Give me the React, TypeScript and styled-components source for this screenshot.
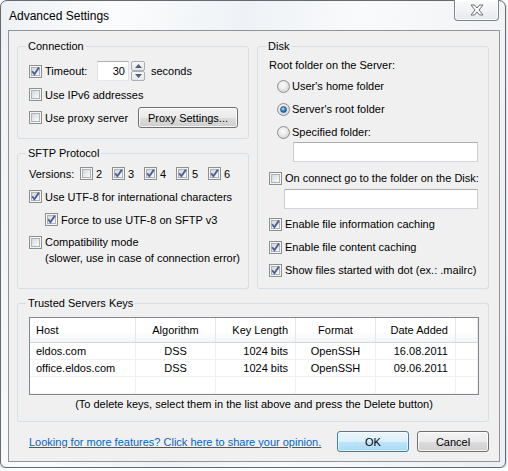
import React from "react";
import styled, { createGlobalStyle, css } from "styled-components";

const GlobalStyle = createGlobalStyle`
  html, body { margin: 0; padding: 0; background: #ffffff; }
  body { font-family: "Liberation Sans", Arial, sans-serif; font-size: 11px; color: #000; }
  *, *::before, *::after { box-sizing: border-box; }
`;

const Window = styled.div`
  width: 506px;
  height: 468px;
  display: flex;
  flex-direction: column;
  padding: 0 5px 5px 7px;
  border: 1px solid #646a70;
  border-radius: 7px 7px 6px 6px;
  background: linear-gradient(100deg, #eef1f5 0%, #fbfcfd 20%, #eef2f6 42%, #f9fafb 62%, #eceff3 100%);
  box-shadow: 0 1px 3px rgba(0, 0, 0, 0.3);
`;

const TitleBar = styled.div`
  flex: 0 0 29px;
  display: flex;
  align-items: flex-start;
  justify-content: space-between;
`;

const Title = styled.div`
  margin: 7px 0 0 1px;
  font-size: 12px;
  line-height: 16px;
`;

const CloseButton = styled.div`
  width: 45px;
  height: 21px;
  margin: -1px 1px 0 0;
  border: 1px solid #7f858c;
  border-top: none;
  border-radius: 0 0 4px 4px;
  background: linear-gradient(#fafbfc, #e6e9ed);
  box-shadow: inset 0 0 0 1px rgba(255, 255, 255, 0.7);
  display: flex;
  align-items: center;
  justify-content: center;
`;

const Client = styled.div`
  flex: 1;
  display: flex;
  flex-direction: column;
  border: 1px solid #8f959b;
  background: #f0f0f0;
  padding: 8px 10px 8px 8px;
`;

const TopRow = styled.div`
  display: grid;
  grid-template-columns: 232px 232px;
  column-gap: 8px;
  height: 250px;
  flex: 0 0 250px;
`;

const Column = styled.div`
  display: flex;
  flex-direction: column;
  gap: 7px;
`;

const Group = styled.fieldset<{ $h: number; $pt: number; $mt?: number }>`
  margin: ${(p) => p.$mt ?? 0}px 0 0 0;
  min-width: 0;
  height: ${(p) => p.$h}px;
  flex: 0 0 auto;
  padding: ${(p) => p.$pt}px 9px 0 11px;
  border: 1px solid #d5dfe5;
  border-radius: 3px;
  display: flex;
  flex-direction: column;
`;

const Legend = styled.legend`
  padding: 0 2px;
  margin-left: -3px;
  line-height: 14px;
  font-size: 11px;
`;

const Row = styled.div<{ $mt?: number; $ml?: number; $h?: number }>`
  display: flex;
  align-items: center;
  flex: 0 0 auto;
  height: ${(p) => p.$h ?? 21}px;
  margin-top: ${(p) => p.$mt ?? 0}px;
  margin-left: ${(p) => p.$ml ?? 0}px;
`;

const TopRowAlign = styled(Row)`
  align-items: flex-start;
  height: auto;
  padding-top: 2px;
`;

const CheckItem = styled.label<{ $w?: number; $top?: boolean }>`
  display: flex;
  align-items: ${(p) => (p.$top ? "flex-start" : "center")};
  gap: 3px;
  flex: 0 0 auto;
  width: ${(p) => (p.$w ? `${p.$w}px` : "auto")};
  line-height: 16px;
`;

const RadioItem = styled.label`
  display: flex;
  align-items: center;
  gap: 2px;
  line-height: 16px;
`;

const TextLines = styled.div`
  display: flex;
  flex-direction: column;
  line-height: 16px;
`;

const Box = styled.span<{ $mt?: number }>`
  position: relative;
  flex: 0 0 13px;
  width: 13px;
  height: 13px;
  margin-top: ${(p) => p.$mt ?? 0}px;
  border: 1px solid #8e8f8f;
  background: #f4f4f4;
  &::before {
    content: "";
    position: absolute;
    left: 1px;
    top: 1px;
    width: 9px;
    height: 9px;
    border: 1px solid #aeb3b9;
    background: linear-gradient(135deg, #d2d5da 0%, #e9ebee 55%, #fbfbfb 100%);
  }
  & > svg {
    position: absolute;
    left: 0;
    top: 0;
  }
`;

const RadioDot = styled.span<{ $checked?: boolean }>`
  position: relative;
  flex: 0 0 13px;
  width: 13px;
  height: 13px;
  border-radius: 50%;
  border: 1px solid #8e8f8f;
  background: radial-gradient(circle at 45% 40%, #fbfbfb 0%, #eeeeee 35%, #d2d2d2 80%, #e4e4e4 100%);
  ${(p) =>
    p.$checked &&
    css`
      &::after {
        content: "";
        position: absolute;
        inset: 2px;
        border-radius: 50%;
        border: 1px solid #24578d;
        background: radial-gradient(circle at 40% 35%, #b5e6fd 0%, #4aa2e0 35%, #14589c 80%);
      }
    `}
`;

const NumberInput = styled.input`
  width: 32px;
  height: 20px;
  margin: 0;
  padding: 0 3px 0 0;
  border: 1px solid #abadb3;
  border-color: #abadb3 #dbdfe6 #e3e9ef #e2e3ea;
  background: #fff;
  font: inherit;
  text-align: right;
  outline: none;
`;

const TextBox = styled.div<{ $w: number; $ml: number; $mt: number }>`
  flex: 0 0 20px;
  width: ${(p) => p.$w}px;
  height: 20px;
  margin: ${(p) => p.$mt}px 0 0 ${(p) => p.$ml}px;
  background: #fff;
  border: 1px solid #abadb3;
  border-color: #abadb3 #c9ccd2 #d2d6dc #c9ccd2;
`;

const Spin = styled.div`
  display: flex;
  flex-direction: column;
  width: 14px;
  height: 20px;
  margin: 0 6px 0 2px;
`;

const SpinButton = styled.div`
  flex: 0 0 10px;
  border: 1px solid #a9adb4;
  border-radius: 2px;
  background: linear-gradient(#f7f7f7, #e4e6e9);
  display: flex;
  align-items: center;
  justify-content: center;
`;

const Button = styled.button<{ $w: number; $default?: boolean }>`
  width: ${(p) => p.$w}px;
  height: 21px;
  padding: 0;
  font: inherit;
  color: #000;
  border: 1px solid ${(p) => (p.$default ? "#3c7fb1" : "#707070")};
  border-radius: 3px;
  background: ${(p) =>
    p.$default
      ? "linear-gradient(#eaf6fd 0%, #d9f0fc 50%, #bee6fd 50%, #a7d9f5 100%)"
      : "linear-gradient(#f2f2f2 0%, #ebebeb 50%, #dddddd 50%, #cfcfcf 100%)"};
  box-shadow: inset 0 0 0 1px ${(p) => (p.$default ? "rgba(255,255,255,0.6)" : "rgba(255,255,255,0.8)")};
`;

const VersionLabel = styled.span`
  flex: 0 0 51px;
`;

const VersionItem = styled(CheckItem)`
  width: 32px;
`;

const Plain = styled.div<{ $mt?: number }>`
  line-height: 14px;
  margin-top: ${(p) => p.$mt ?? 0}px;
`;

const List = styled.div`
  width: 450px;
  height: 78px;
  border: 1px solid #828790;
  background: #fff;
  display: grid;
  grid-template-columns: 106px 80px 80px 80px 80px 1fr;
  grid-template-rows: 25px repeat(3, 17px);
  align-content: start;
`;

type Align = "left" | "center" | "right";

const alignCss = (a: Align) =>
  a === "left"
    ? css`justify-content: flex-start; padding-left: 6px;`
    : a === "right"
    ? css`justify-content: flex-end; padding-right: 7px;`
    : css`justify-content: center;`;

const HeadCell = styled.div<{ $align: Align }>`
  display: flex;
  align-items: center;
  ${(p) => alignCss(p.$align)}
  border-right: 1px solid #e3e6ea;
  border-bottom: 1px solid #d5d5d5;
  background: linear-gradient(#ffffff 0%, #ffffff 55%, #f4f5f7 100%);
`;

const Cell = styled.div<{ $align: Align }>`
  display: flex;
  align-items: center;
  ${(p) => alignCss(p.$align)}
  border-right: 1px solid #f0f0f0;
  border-bottom: 1px solid #f0f0f0;
  white-space: nowrap;
`;

const Note = styled.div`
  margin-top: 1px;
  line-height: 16px;
  text-align: center;
`;

const BottomBar = styled.div`
  display: flex;
  align-items: center;
  gap: 8px;
  height: 21px;
  margin-top: 9px;
  padding-left: 12px;
`;

const Link = styled.a`
  margin-right: auto;
  color: #0066cc;
  text-decoration: underline;
  cursor: pointer;
`;

const Check = () => (
  <svg width="11" height="11" viewBox="0 0 11 11">
    <path d="M2.2 5.3 L4.4 8.2 L8.9 1.6" fill="none" stroke="#4a5f97" strokeWidth="1.9" />
  </svg>
);

const CheckBox = ({ checked, mt }: { checked?: boolean; mt?: number }) => (
  <Box $mt={mt}>{checked && <Check />}</Box>
);

const Arrow = ({ up }: { up?: boolean }) => (
  <svg width="7" height="4" viewBox="0 0 7 4">
    <path d={up ? "M0 4 L3.5 0 L7 4 Z" : "M0 0 L3.5 4 L7 0 Z"} fill="#4d5d7e" />
  </svg>
);

const CloseGlyph = () => (
  <svg width="14" height="12" viewBox="0 0 14 12">
    <polygon
      points="1,1 4.5,1 7,4 9.5,1 13,1 9,6 13,11 9.5,11 7,8 4.5,11 1,11 5,6"
      fill="#fbfbfb"
      stroke="#6a6e73"
      strokeWidth="1"
      strokeLinejoin="round"
    />
  </svg>
);

const keys = [
  { host: "eldos.com", alg: "DSS", len: "1024 bits", fmt: "OpenSSH", date: "16.08.2011" },
  { host: "office.eldos.com", alg: "DSS", len: "1024 bits", fmt: "OpenSSH", date: "09.06.2011" },
  { host: "", alg: "", len: "", fmt: "", date: "" },
];

const versions: [string, boolean][] = [
  ["2", false],
  ["3", true],
  ["4", true],
  ["5", true],
  ["6", true],
];

export default function App() {
  return (
    <>
      <GlobalStyle />
      <Window>
        <TitleBar>
          <Title>Advanced Settings</Title>
          <CloseButton>
            <CloseGlyph />
          </CloseButton>
        </TitleBar>
        <Client>
          <TopRow>
            <Column>
              <Group $h={100} $pt={8}>
                <Legend>Connection</Legend>
                <Row $h={20}>
                  <CheckItem $w={68}>
                    <CheckBox checked />
                    Timeout:
                  </CheckItem>
                  <NumberInput readOnly value="30" />
                  <Spin>
                    <SpinButton>
                      <Arrow up />
                    </SpinButton>
                    <SpinButton>
                      <Arrow />
                    </SpinButton>
                  </Spin>
                  seconds
                </Row>
                <Row $mt={3}>
                  <CheckItem>
                    <CheckBox />
                    Use IPv6 addresses
                  </CheckItem>
                </Row>
                <Row $mt={2}>
                  <CheckItem $w={109}>
                    <CheckBox />
                    Use proxy server
                  </CheckItem>
                  <Button $w={100}>Proxy Settings...</Button>
                </Row>
              </Group>
              <Group $h={143} $pt={3}>
                <Legend>SFTP Protocol</Legend>
                <Row>
                  <VersionLabel>Versions:</VersionLabel>
                  {versions.map(([v, c]) => (
                    <VersionItem key={v}>
                      <CheckBox checked={c} />
                      {v}
                    </VersionItem>
                  ))}
                </Row>
                <Row $mt={2}>
                  <CheckItem>
                    <CheckBox checked />
                    Use UTF-8 for international characters
                  </CheckItem>
                </Row>
                <Row $mt={2} $ml={16}>
                  <CheckItem>
                    <CheckBox checked />
                    Force to use UTF-8 on SFTP v3
                  </CheckItem>
                </Row>
                <TopRowAlign $mt={2}>
                  <CheckItem $top>
                    <CheckBox mt={1.5} />
                    <TextLines>
                      <span>Compatibility mode</span>
                      <span>(slower, use in case of connection error)</span>
                    </TextLines>
                  </CheckItem>
                </TopRowAlign>
              </Group>
            </Column>
            <Group $h={250} $pt={5}>
              <Legend>Disk</Legend>
              <Plain>Root folder on the Server:</Plain>
              <Row $h={18} $mt={5} $ml={8}>
                <RadioItem>
                  <RadioDot />
                  User's home folder
                </RadioItem>
              </Row>
              <Row $h={18} $mt={5} $ml={8}>
                <RadioItem>
                  <RadioDot $checked />
                  Server's root folder
                </RadioItem>
              </Row>
              <Row $h={18} $mt={5} $ml={8}>
                <RadioItem>
                  <RadioDot />
                  Specified folder:
                </RadioItem>
              </Row>
              <TextBox $w={185} $ml={24} $mt={1} />
              <Row $h={18} $mt={7}>
                <CheckItem>
                  <CheckBox />
                  On connect go to the folder on the Disk:
                </CheckItem>
              </Row>
              <TextBox $w={194} $ml={15} $mt={2} />
              <Row $h={18} $mt={6}>
                <CheckItem>
                  <CheckBox checked />
                  Enable file information caching
                </CheckItem>
              </Row>
              <Row $h={18} $mt={5}>
                <CheckItem>
                  <CheckBox checked />
                  Enable file content caching
                </CheckItem>
              </Row>
              <Row $h={18} $mt={5}>
                <CheckItem>
                  <CheckBox checked />
                  Show files started with dot (ex.: .mailrc)
                </CheckItem>
              </Row>
            </Group>
          </TopRow>
          <Group $h={126} $pt={7} $mt={7}>
            <Legend>Trusted Servers Keys</Legend>
            <List>
              <HeadCell $align="left">Host</HeadCell>
              <HeadCell $align="center">Algorithm</HeadCell>
              <HeadCell $align="right">Key Length</HeadCell>
              <HeadCell $align="center">Format</HeadCell>
              <HeadCell $align="right">Date Added</HeadCell>
              <HeadCell $align="left" />
              {keys.map((k, i) => (
                <React.Fragment key={i}>
                  <Cell $align="left">{k.host}</Cell>
                  <Cell $align="center">{k.alg}</Cell>
                  <Cell $align="right">{k.len}</Cell>
                  <Cell $align="center">{k.fmt}</Cell>
                  <Cell $align="right">{k.date}</Cell>
                  <Cell $align="left" />
                </React.Fragment>
              ))}
            </List>
            <Note>(To delete keys, select them in the list above and press the Delete button)</Note>
          </Group>
          <BottomBar>
            <Link>Looking for more features? Click here to share your opinion.</Link>
            <Button $w={72} $default>
              OK
            </Button>
            <Button $w={72}>Cancel</Button>
          </BottomBar>
        </Client>
      </Window>
    </>
  );
}
